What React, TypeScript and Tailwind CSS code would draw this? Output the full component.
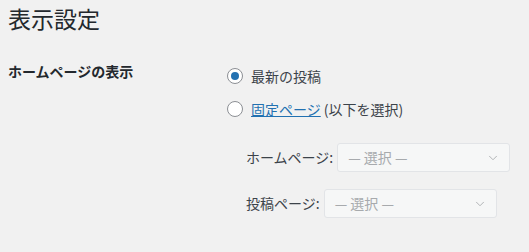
import { ChevronDown } from "lucide-react";

const Radio = ({ checked }: { checked?: boolean }) => (
  <span className="w-4 h-4 rounded-full border border-[#8c8f94] bg-white flex items-center justify-center shrink-0">
    {checked && <span className="w-2 h-2 rounded-full bg-[#2271b1]" />}
  </span>
);

const PageSelect = ({ label }: { label: string }) => (
  <div className="flex items-center gap-1">
    <span className="text-[14px] text-[#3c434a]">{label}</span>
    <div className="w-[173px] h-[29px] border border-[#e2e4e7] bg-[#f6f7f7] rounded-[3px] flex items-center justify-between pl-[10px] pr-[9px]">
      <span className="text-[14px] text-[#a7aaad]">— 選択 —</span>
      <ChevronDown size={14} strokeWidth={1.5} className="text-[#a7aaad]" />
    </div>
  </div>
);

export default function App() {
  return (
    <div className="w-[529px] h-[252px] bg-[#f1f1f1] pl-2 text-[#23282d] font-['Noto_Sans_CJK_JP',sans-serif] overflow-hidden">
      <h1 className="text-[23px] leading-[24px] pt-[6px] font-normal">表示設定</h1>

      <div className="flex mt-[31px]">
        <div className="w-[219px] text-[14px] leading-[20px] font-bold">ホームページの表示</div>

        <div className="pt-[5px]">
          <div className="flex flex-col gap-[13px]">
            <label className="flex items-center gap-2 h-5 text-[14px] text-[#3c434a]">
              <Radio checked />
              最新の投稿
            </label>
            <label className="flex items-center gap-2 h-5 text-[14px] text-[#3c434a]">
              <Radio />
              <span>
                <a className="text-[#2271b1] underline">固定ページ</a> (以下を選択)
              </span>
            </label>
          </div>

          <div className="flex flex-col gap-[17px] mt-[24px] pl-[19px]">
            <PageSelect label="ホームページ:" />
            <PageSelect label="投稿ページ:" />
          </div>
        </div>
      </div>
    </div>
  );
}
